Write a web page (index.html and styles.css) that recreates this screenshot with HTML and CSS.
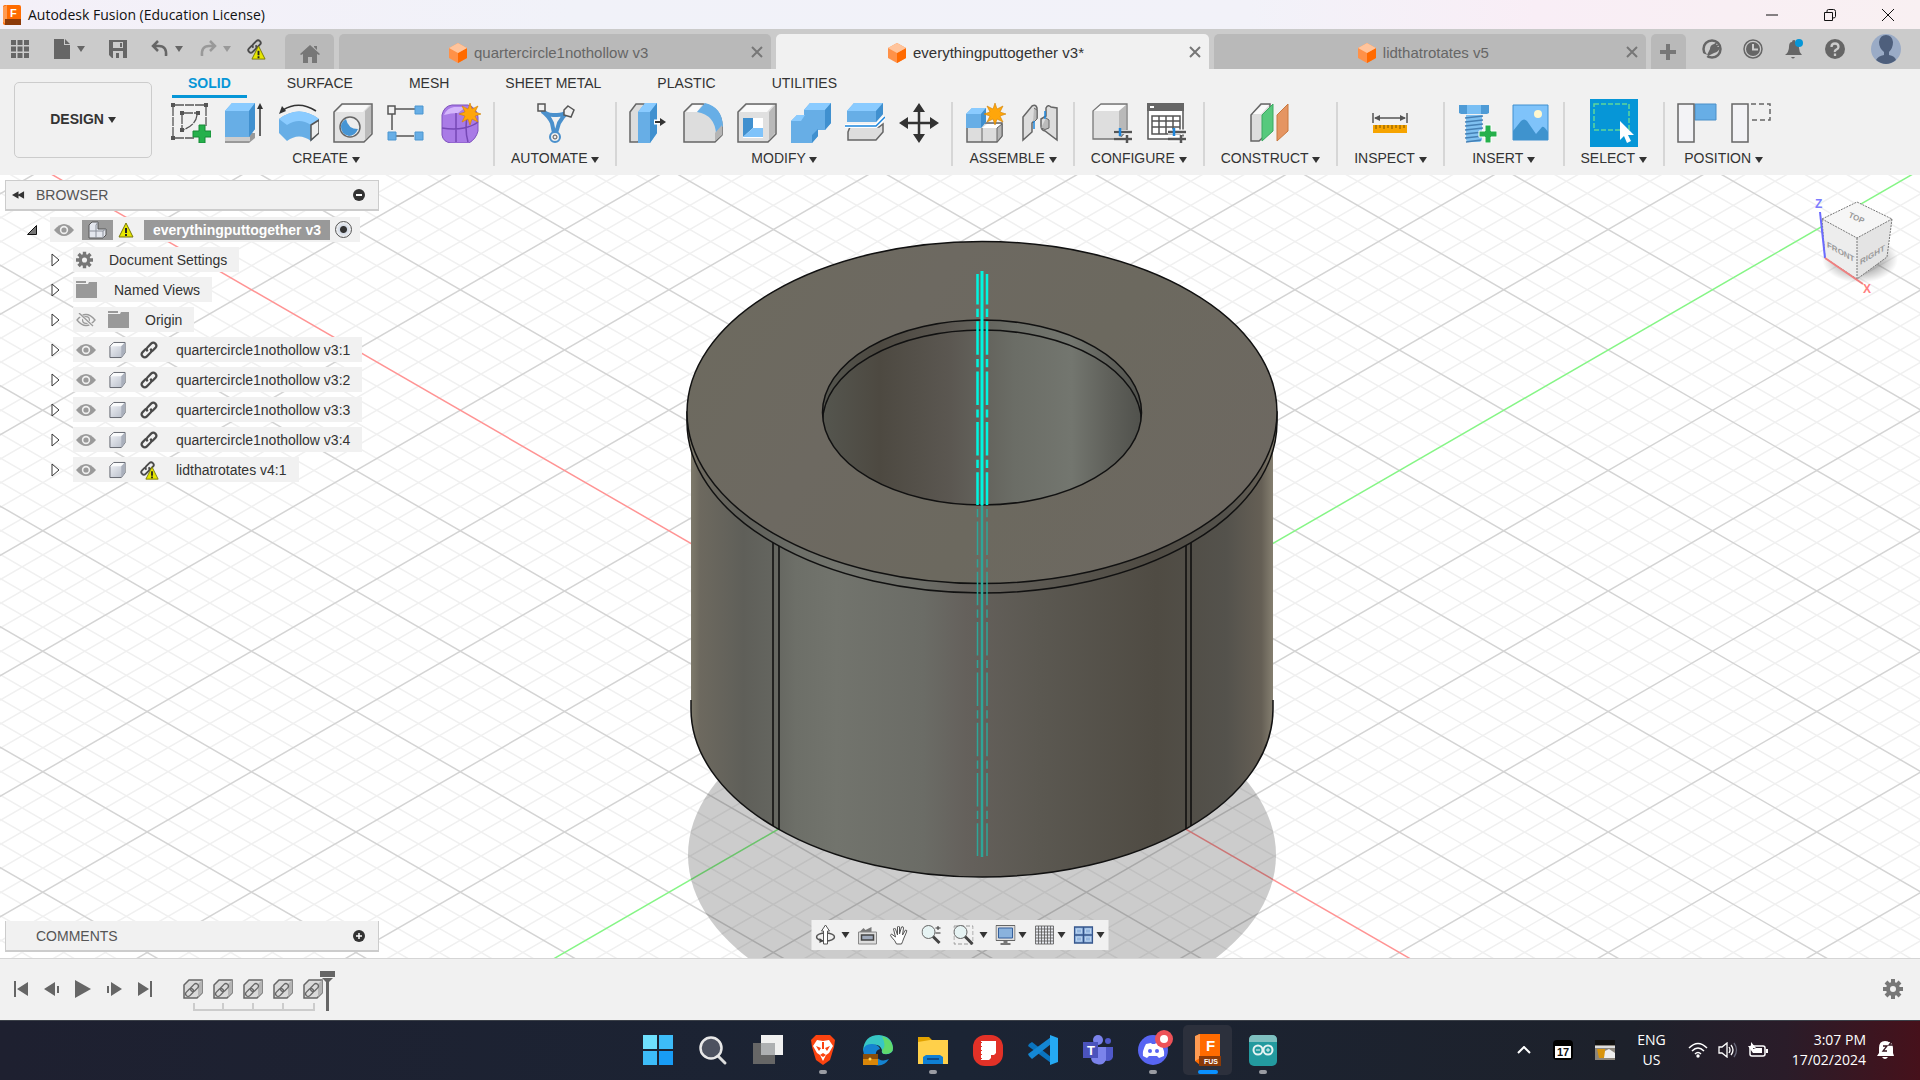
FILE: index.html
```
<!DOCTYPE html>
<html lang="en">
  <head>
    <meta charset="UTF-8" />
    <meta name="viewport" content="width=device-width, initial-scale=1.0" />
    <title>Autodesk Fusion (Education License)</title>
    <link rel="stylesheet" href="styles.css">
  </head>
  <body>
    <!-- Shared icons -->
    <svg class="defs" aria-hidden="true">
      <defs>
        <linearGradient id="steel" x1="0" y1="0" x2="1" y2="1">
          <stop offset="0" stop-color="#f4f6fa" />
          <stop offset="1" stop-color="#b4bac6" />
        </linearGradient>
      </defs>
      <symbol id="doc-cube" viewBox="0 0 20 20">
        <path d="M10 0l9 5v10l-9 5-9-5V5z" fill="#ff9148" />
        <path d="M10 10l9-5v10l-9 5z" fill="#ff6a00" />
        <path d="M10 0l9 5-9 5-9-5z" fill="#ffc49c" />
      </symbol>
      <symbol id="close" viewBox="0 0 12 12">
        <path d="M1 1l10 10M11 1L1 11" fill="none" stroke="#777" stroke-width="2" />
      </symbol>
      <symbol id="warn" viewBox="0 0 16 16">
        <path d="M8 1l7 14H1z" fill="#e6e600" stroke="#77770a" />
        <path d="M8 6v5M8 12v2" stroke="#222" stroke-width="2" />
      </symbol>
      <symbol id="link" viewBox="0 0 20 20">
        <g fill="none" stroke="#4a4a4a" stroke-width="2.2" transform="rotate(-45 10 10)">
          <path d="M9 7H4Q1 7 1 10t3 3h5q2.500 0 3-3" />
          <path d="M11 13h5q3 0 3-3t-3-3h-5q-2.500 0-3 3" />
        </g>
      </symbol>
      <symbol id="eye" viewBox="0 0 20 14">
        <path d="M0 7Q10-5 20 7 10 19 0 7z" fill="#9a9a9a" />
        <circle cx="10" cy="7" r="4.2" fill="#f0f0f0" />
        <circle cx="10" cy="7" r="2.6" fill="#9a9a9a" />
      </symbol>
      <symbol id="eye-off" viewBox="0 0 20 14">
        <path d="M1 7Q10-4 19 7 10 18 1 7z" fill="none" stroke="#999" stroke-width="1.3" />
        <circle cx="10" cy="7" r="3.4" fill="none" stroke="#999" stroke-width="1.3" />
        <path d="M3 1l14 12" stroke="#f0f0f0" stroke-width="3" />
        <path d="M3 0l14 13" stroke="#999" stroke-width="1.3" />
      </symbol>
      <symbol id="folder" viewBox="0 0 21 17">
        <path d="M0 0h10v2H0zM0 3h12l1-2h8v16H0z" fill="#999" />
      </symbol>
      <symbol id="gear" viewBox="0 0 20 20">
        <g stroke="#777" stroke-width="4">
          <path d="M10 0v20M0 10h20M3 3l14 14M17 3L3 17" />
        </g>
        <circle cx="10" cy="10" r="7" fill="#777" />
        <circle cx="10" cy="10" r="3" fill="#f1f1f1" />
      </symbol>
      <symbol id="part" viewBox="0 0 18 18">
        <path d="M1 5l4-4h12v11l-4 5H1z" fill="url(#steel)" stroke="#5c6068" stroke-linejoin="round" />
        <path d="M1.500 5L5 1.500h11L13 5z" fill="#fafbfc" />
        <path d="M13 5v12l4-5V1z" fill="#a9afbb" />
      </symbol>
      <symbol id="feature" viewBox="0 0 20 20">
        <path d="M1 6l5-5h13v13l-5 5H1z" fill="#dadada" stroke="#666" stroke-width="1.5" />
        <path d="M15 5l4-4v13l-4 4z" fill="#b5b5b5" />
        <g fill="none" stroke="#666" stroke-width="1.3" transform="rotate(-45 9 11)">
          <rect x="1" y="8.500" width="9" height="5" rx="2.500" />
          <rect x="8" y="8.500" width="9" height="5" rx="2.500" />
        </g>
      </symbol>
    </svg>

    <header class="titlebar">
      <svg class="app-logo" viewBox="0 0 18 20">
        <rect width="18" height="20" rx="2" fill="#ff6b00" />
        <path d="M0 2l4-2v20l-4-3z" fill="#ff9a50" />
        <path d="M2 14h16v6H2z" fill="#8c3a08" />
        <text x="7" y="12" class="logo-letter">F</text>
      </svg>
      <h1>Autodesk Fusion (Education License)</h1>
      <div class="window-buttons">
        <button aria-label="Minimize"><svg viewBox="0 0 12 12"><path d="M0 6h12" /></svg></button>
        <button aria-label="Restore"><svg viewBox="0 0 12 12"><path d="M.5 3.500h8v8h-8zM3 3V2q0-1.500 1.500-1.500h5Q11.500.5 11.500 2.500v5q0 1.500-2.500 1.500" /></svg></button>
        <button aria-label="Close"><svg viewBox="0 0 12 12"><path d="M0 0l12 12M12 0L0 12" /></svg></button>
      </div>
    </header>

    <!-- Quick access and document tabs -->
    <div class="docbar">
      <div class="quick">
        <button class="q-grid" aria-label="Data panel"><svg viewBox="0 0 18 18"><path d="M0 0h5v5H0zM6.500 0h5v5h-5zM13 0h5v5h-5zM0 6.500h5v5H0zM6.500 6.500h5v5h-5zM13 6.500h5v5h-5zM0 13h5v5H0zM6.500 13h5v5h-5zM13 13h5v5h-5z" fill="#666" /></svg></button>
        <button class="q-file" aria-label="File"><svg viewBox="0 0 18 20"><path d="M1 0h10v6h6v14H1zM12 0l5 5h-5z" fill="#666" /></svg><span class="caret big"></span></button>
        <button class="q-save" aria-label="Save"><svg viewBox="0 0 18 18"><path d="M0 0h18v18H3l-3-3zM4 2v6h10V2zM4 11v7h10v-7z" fill="#666" fill-rule="evenodd" /><path d="M11 3h2v4h-2zM7 13h3v5H7z" fill="#666" /></svg></button>
        <button class="q-undo" aria-label="Undo"><svg viewBox="0 0 18 18"><path d="M7 1L2 6l5 5M2 6h6q8 0 7 10" fill="none" stroke="#666" stroke-width="2.5" /></svg><span class="caret big"></span></button>
        <button class="q-redo" aria-label="Redo"><svg viewBox="0 0 18 18"><path d="M11 1l5 5-5 5M16 6h-6Q2 6 3 16" fill="none" stroke="#999" stroke-width="2.500" /></svg><span class="caret big dim"></span></button>
        <button class="q-link" aria-label="Update references"><svg viewBox="0 0 22 22"><use href="#link" x="1" y="0" width="17" height="17" /><use href="#warn" x="6" y="7" width="15" height="15" /></svg></button>
      </div>
      <nav class="doc-tabs">
        <button class="home" aria-label="Home"><svg viewBox="0 0 20 18"><path d="M10 0l10 9-1 1-2-1v9h-5v-6H8v6H3V9l-2 1-1-1zM14 1h3v4l-3-3z" fill="#777" /></svg></button>
        <div class="doc-tab"><a href="#"><svg viewBox="0 0 20 20"><use href="#doc-cube" /></svg>quartercircle1nothollow v3</a><button aria-label="Close tab"><svg viewBox="0 0 12 12"><use href="#close" /></svg></button></div>
        <div class="doc-tab current"><a href="#"><svg viewBox="0 0 20 20"><use href="#doc-cube" /></svg>everythingputtogether v3*</a><button aria-label="Close tab"><svg viewBox="0 0 12 12"><use href="#close" /></svg></button></div>
        <div class="doc-tab"><a href="#"><svg viewBox="0 0 20 20"><use href="#doc-cube" /></svg>lidthatrotates v5</a><button aria-label="Close tab"><svg viewBox="0 0 12 12"><use href="#close" /></svg></button></div>
        <button class="new-tab" aria-label="New tab"><svg viewBox="0 0 16 16"><path d="M8 0v16M0 8h16" stroke="#777" stroke-width="4" /></svg></button>
      </nav>
      <div class="account">
        <button aria-label="Extensions"><svg viewBox="0 0 20 20"><circle cx="10" cy="10" r="8.500" fill="none" stroke="#666" stroke-width="2.500" /><path d="M4 18l4-8q0-4 4-5l4-3-2 4 4-1-3 3 3 0q-1 5-6 6z" fill="#666" /><path d="M0 14l6 2-3 4z" fill="#cbcbcb" /></svg></button>
        <button aria-label="Job status"><svg viewBox="0 0 20 20"><circle cx="10" cy="10" r="9" fill="none" stroke="#666" stroke-width="1.500" /><circle cx="10" cy="10" r="7" fill="#666" /><path d="M10 5v5.500h5" fill="none" stroke="#ccc" stroke-width="2" /></svg></button>
        <button aria-label="Notifications"><svg viewBox="0 0 20 20"><path d="M1 16q4-3 4-8 0-5 3-5 0-2 2-2t1 2q4 1 4 6 0 4 3 7zM7 18h4q-2 3-4 0z" fill="#666" /><circle cx="15" cy="4" r="4" fill="#0696d7" /></svg></button>
        <button aria-label="Help"><svg viewBox="0 0 20 20"><circle cx="10" cy="10" r="10" fill="#666" /><path d="M6.500 8q0-3.500 3.500-3.500T13.500 8q0 1.500-2 2.500T10 13M10 14.500v2.500" fill="none" stroke="#ccc" stroke-width="2.300" /></svg></button>
        <button class="avatar" aria-label="Profile"><svg viewBox="0 0 30 30"><circle cx="15" cy="15" r="15" fill="#9aabc6" /><path d="M5 26q2-4 8-5v-3Q8 14 8 8q1-7 7-7t7 7q0 6-4 10v3q6 1 7 5-10 8-20 0z" fill="#4e5f7c" /></svg></button>
      </div>
    </div>

    <!-- Ribbon -->
    <section class="ribbon">
      <button class="workspace">DESIGN <span class="caret"></span></button>
      <div class="ribbon-main">
        <nav class="ribbon-tabs">
          <a href="#" class="active">SOLID</a>
          <a href="#">SURFACE</a>
          <a href="#">MESH</a>
          <a href="#">SHEET METAL</a>
          <a href="#">PLASTIC</a>
          <a href="#">UTILITIES</a>
        </nav>
        <div class="groups">
          <div class="group">
            <div class="tools">
              <button aria-label="Create sketch"><svg viewBox="0 0 40 40"><path d="M4 2h31M2 4v31M35 4v20M4 35h19M11 12v14M13 10h13M26 12q-1 10-14 15" fill="none" stroke="#555" stroke-width="1.300" stroke-dasharray="9 1" /><path d="M0 0h4v4H0zM33 0h4v4h-4zM0 33h4v4H0zM9 8h4v4H9zM25 8h4v4h-4zM9 25h4v4H9z" fill="#555" /><path d="M28 22h6v6h6v6h-6v6h-6v-6h-6v-6h6z" fill="#25b04b" stroke="#178a36" /></svg></button>
              <button aria-label="Extrude"><svg viewBox="0 0 40 40"><path d="M0 35l6-5h24v5l-6 5H0z" fill="#999" /><path d="M0 34h25v4H0z" fill="#ccc" /><path d="M0 8l7-8h23v26l-6 8H0z" fill="#67aee6" /><path d="M0 8l7-8h23l-6 8z" fill="#8acbff" /><path d="M24 8l6-8v26l-6 8z" fill="#4090cf" /><path d="M35 33V4" stroke="#333" stroke-width="1.500" /><path d="M35 0l3 6h-6z" fill="#333" /></svg></button>
              <button aria-label="Revolve"><svg viewBox="0 0 40 40"><path d="M0 16q20-15 40 0v14l-8 8q-12-9-24 0L0 30z" fill="#67aee6" /><path d="M0 16q20-15 40 0l-8 6q-12-8-24 0z" fill="#8acbff" /><path d="M32 22l8-5v13l-8 7z" fill="#eee" stroke="#555" stroke-width="1.500" /><path d="M37 8Q20-3 4 7" fill="none" stroke="#333" stroke-width="1.500" /><path d="M0 11l3-8 4 5z" fill="#333" /></svg></button>
              <button aria-label="Hole"><svg viewBox="0 0 40 40"><path d="M1 9l8-8h30v30l-8 8H1z" fill="#e2e2e2" stroke="#666" stroke-width="1.500" /><path d="M32 8l6-6v28l-6 7z" fill="#bbb" /><path d="M3 9l7-7h26l-6 7z" fill="#f8f8f8" /><circle cx="17" cy="24" r="10" fill="#eee" stroke="#666" stroke-width="1.500" /><path d="M13 16q2 10 12 10-3 7-9 7-8-2-8-9 0-5 5-8z" fill="#4695d4" /></svg></button>
              <button aria-label="Pattern"><svg viewBox="0 0 40 40"><path d="M8 6h20M5 10v17M9 33h18" stroke="#555" stroke-width="1.500" /><path d="M1 3h7v8H1z" fill="#f1f1f1" stroke="#555" stroke-width="1.500" /><path d="M28 3h8v8h-8zM1 29h8v8H1zM28 29h8v8h-8z" fill="#67aee6" stroke="#4d96d0" /></svg></button>
              <button aria-label="Create form"><svg viewBox="0 0 40 40"><path d="M1 12q2-9 10-10h16q9 3 10 12v14q-2 8-9 12H10q-8-1-9-8z" fill="#a97be6" stroke="#7e52bd" /><path d="M3 12q3-7 10-8h12l-8 6q-7 0-14 2z" fill="#d4b6fb" /><path d="M1 25q12 2 22 0 9-2 14-6M15 10v29M27 10q-4 14 0 29" fill="none" stroke="#7548b5" stroke-width="1.500" /><path d="M29 0l2 6 6-3-3 6 6 2-6 2 3 6-6-3-2 6-2-6-6 3 3-6-6-2 6-2-3-6 6 3z" fill="#ffa60a" stroke="#d18200" stroke-width=".6" /></svg></button>
            </div>
            <button class="group-label">CREATE <span class="caret"></span></button>
          </div>
          <div class="group">
            <div class="tools">
              <button aria-label="Automated modeling"><svg viewBox="0 0 40 40"><path d="M6 6q5 6 12 6h4q6 0 11-4M7 8q7 5 10 12l2 10M33 9q-6 5-9 11l-3 10" fill="none" stroke="#4a90cc" stroke-width="4" /><circle cx="20" cy="34" r="5" fill="#eee" stroke="#4a90cc" stroke-width="2" /><circle cx="20" cy="34" r="2" fill="none" stroke="#555" /><path d="M3 1h7v7H3z" fill="#f1f1f1" stroke="#555" stroke-width="1.500" /><path d="M33 3l6 4-3 7-7-2v-5z" fill="#f1f1f1" stroke="#555" stroke-width="1.500" /></svg></button>
            </div>
            <button class="group-label">AUTOMATE <span class="caret"></span></button>
          </div>
          <div class="group">
            <div class="tools">
              <button aria-label="Press pull"><svg viewBox="0 0 40 40"><path d="M1 9l6-8h8v30l-6 8H1z" fill="#ddd" stroke="#666" stroke-width="1.500" /><path d="M9 9l7-9h12v30l-7 10H9z" fill="#67aee6" /><path d="M9 9l7-9h12l-7 9z" fill="#8acbff" /><path d="M21 9l7-9v30l-7 10z" fill="#4090cf" /><path d="M25 19h8" stroke="#fff" stroke-width="5" /><path d="M26 19h7" stroke="#333" stroke-width="2" /><path d="M31 15l6 4-6 4z" fill="#333" /></svg></button>
              <button aria-label="Fillet"><svg viewBox="0 0 40 40"><path d="M1 9l8-8h11q19 4 19 23v8l-7 7H1z" fill="#ddd" stroke="#666" stroke-width="1.500" /><path d="M3 9l7-7h9l-5 7z" fill="#fafafa" /><path d="M14 9l8-9q17 4 18 23l-7 8Q32 12 14 9z" fill="#67aee6" /><path d="M32 30l7-8v10l-7 6z" fill="#b5b5b5" /></svg></button>
              <button aria-label="Shell"><svg viewBox="0 0 40 40"><path d="M1 9l8-8h30v30l-8 8H1z" fill="#e0e0e0" stroke="#666" stroke-width="1.500" /><path d="M32 9l6-7v28l-6 7z" fill="#b9b9b9" /><path d="M3 9l7-7h26l-6 7z" fill="#fafafa" /><path d="M6 15h20v20H6z" fill="#fff" /><path d="M6 15h10v10L6 34z" fill="#4090cf" /><path d="M16 25h10v9H6z" fill="#7fc3fa" /></svg></button>
              <button aria-label="Combine"><svg viewBox="0 0 40 40"><path d="M0 18l6-6h7V7l6-7h21v20l-6 7h-7v6l-6 7H0z" fill="#67aee6" /><path d="M0 18l6-6h8l-4 6zM13 7l6-7h21l-6 7z" fill="#8acbff" /><path d="M34 7l6-7v20l-6 7zM21 32l6-6v7l-6 7z" fill="#4090cf" /></svg></button>
              <button aria-label="Split body"><svg viewBox="0 0 40 40"><path d="M3 29l2-5h29l4-3v8l-7 8H3z" fill="#ddd" stroke="#666" stroke-width="1.500" /><path d="M2 8l7-8h29v11l-7 8H2z" fill="#67aee6" /><path d="M2 8l7-8h29l-7 8z" fill="#8acbff" /><path d="M31 8l7-8v11l-7 8z" fill="#4090cf" /><path d="M0 23h31l9-9" fill="none" stroke="#fff" stroke-width="4" /><path d="M0 23h31l9-9" fill="none" stroke="#1d86dd" stroke-width="1.500" /></svg></button>
              <button aria-label="Move"><svg viewBox="0 0 40 40"><path d="M20 8v24M8 20h24" stroke="#333" stroke-width="2.500" /><path d="M20 0l6 9H14zM20 40l6-9H14zM0 20l9-6v12zM40 20l-9-6v12z" fill="#333" /></svg></button>
            </div>
            <button class="group-label">MODIFY <span class="caret"></span></button>
          </div>
          <div class="group">
            <div class="tools">
              <button aria-label="New component"><svg viewBox="0 0 40 40"><path d="M1 24l4-4h31v13l-5 6H1z" fill="#ddd" stroke="#666" stroke-width="1.500" /><path d="M16 25l5-4h14l-4 4z" fill="#fff" /><path d="M31 25l5-4v12l-5 6zM16 25v14" fill="#b7b7b7" stroke="#666" /><path d="M0 11l6-6h14v14l-5 6H0z" fill="#67aee6" /><path d="M0 11l6-6h14l-5 6z" fill="#8acbff" /><path d="M15 11l5-6v14l-5 6z" fill="#4090cf" /><path d="M29 0l2 6 6-3-3 6 6 2-6 2 3 6-6-3-2 6-2-6-6 3 3-6-6-2 6-2-3-6 6 3z" fill="#ffa60a" stroke="#d18200" stroke-width=".6" /></svg></button>
              <button aria-label="Joint"><svg viewBox="0 0 40 40"><path d="M3 14L12 3q4-2 5 2v10l-5 5v9l-9 8zM37 5v32l-12-9q-4-1-4-5v-7l5-3V5q2-4 5-1z" fill="#ddd" stroke="#666" stroke-width="1.500" /><path d="M14 5l3 2v9l-4 4M26 15l3 2v8q-4 3-8 0" fill="#bbb" stroke="#666" /><path d="M14 18v8M25 8v8" stroke="#1d86dd" stroke-width="1.500" /></svg></button>
            </div>
            <button class="group-label">ASSEMBLE <span class="caret"></span></button>
          </div>
          <div class="group">
            <div class="tools">
              <button aria-label="Configure design"><svg viewBox="0 0 40 40"><path d="M1 8l8-7h26v26l-8 9H1z" fill="#dedede" stroke="#777" stroke-width="1.300" /><path d="M2 8l7-6h25l-7 6z" fill="#fafafa" /><path d="M27 8l7-6v25l-7 8z" fill="#b9b9b9" /><path d="M22 29h18M22 36h18" stroke="#fff" stroke-width="4" /><path d="M22 29h18M22 36h18" stroke="#555" stroke-width="2.500" /><path d="M35 32v8" stroke="#555" stroke-width="2.500" /><path d="M28 25v8" stroke="#1d86dd" stroke-width="2.500" /></svg></button>
              <button aria-label="Configuration table"><svg viewBox="0 0 40 40"><path d="M2 3h35v33H2z" fill="#fff" stroke="#555" stroke-width="1.500" /><path d="M1 0h37v8H1z" fill="#666" /><path d="M4 3h4v2H4z" fill="#fff" /><path d="M6 13h28v18H6zM6 18h28M6 24h28M13 13v18M20 13v18M27 13v18" fill="none" stroke="#555" stroke-width="1.500" /><path d="M22 29h18M22 36h18" stroke="#fff" stroke-width="5" /><path d="M22 29h18M22 36h18M35 32v8" stroke="#555" stroke-width="2.500" /><path d="M28 25v8" stroke="#1d86dd" stroke-width="2.500" /></svg></button>
            </div>
            <button class="group-label">CONFIGURE <span class="caret"></span></button>
          </div>
          <div class="group">
            <div class="tools">
              <button aria-label="Offset plane"><svg viewBox="0 0 40 40"><path d="M1 12L11 1h9v27L9 38H1z" fill="#ddd" stroke="#666" stroke-width="1.500" /><path d="M3 11l9-9h7l-8 9z" fill="#fafafa" /><path d="M12 12L23 1v27L12 38z" fill="#57c97d" stroke="#3aa961" /><path d="M27 12L38 1v27L27 38z" fill="#e59562" stroke="#c9783f" /></svg></button>
            </div>
            <button class="group-label">CONSTRUCT <span class="caret"></span></button>
          </div>
          <div class="group">
            <div class="tools">
              <button aria-label="Measure"><svg viewBox="0 0 40 40"><path d="M3 10v10M37 10v10M5 15h30" stroke="#555" stroke-width="1.500" /><path d="M4 15l6-3v6zM36 15l-6-3v6z" fill="#555" /><path d="M3 22h34v8H3z" fill="#f6a400" /><path d="M6 22v4M10 22v3M14 22v4M18 22v3M22 22v4M26 22v3M30 22v4M34 22v3" stroke="#7a5200" /></svg></button>
            </div>
            <button class="group-label">INSPECT <span class="caret"></span></button>
          </div>
          <div class="group">
            <div class="tools">
              <button aria-label="Insert fastener"><svg viewBox="0 0 40 40"><path d="M2 2h30v8l-2 1H4l-2-1z" fill="#4e9bd6" /><path d="M10 2h14v9H10z" fill="#79bff4" /><path d="M9 12h16v25l-2 2H11l-2-2z" fill="#7fc0f0" /><path d="M8 15l18-2M8 19l18-2M8 23l18-2M8 27l18-2M8 31l18-2M8 35l18-2M9 39l15-2" stroke="#4580b5" stroke-width="1.300" /><path d="M28 22h6v6h6v6h-6v6h-6v-6h-6v-6h6z" fill="#25b04b" stroke="#fff" /></svg></button>
              <button aria-label="Insert image"><svg viewBox="0 0 40 40"><path d="M2 2h35v35H2z" fill="#7fc3fa" stroke="#4090cf" /><path d="M2 28l8-10q3-3 6 0l9 13 6-7q2-1 6 5v8H2z" fill="#3f93ce" /><circle cx="27" cy="11" r="4" fill="#fff8cf" /></svg></button>
            </div>
            <button class="group-label">INSERT <span class="caret"></span></button>
          </div>
          <div class="group">
            <div class="tools">
              <button class="selected" aria-label="Select"><svg viewBox="0 0 48 48"><path d="M4 5h35v26H4z" fill="none" stroke="#5fd69a" stroke-width="1.500" stroke-dasharray="5 2" /><path d="M30 22v19l4-4 3 7 4-2-3-6h6z" fill="#fff" /></svg></button>
            </div>
            <button class="group-label">SELECT <span class="caret"></span></button>
          </div>
          <div class="group">
            <div class="tools">
              <button aria-label="Capture position"><svg viewBox="0 0 40 40"><path d="M18 1h21v16H18z" fill="#67aee6" stroke="#4a8fc8" /><path d="M1 1h16v38H1z" fill="#f3f3f6" stroke="#666" stroke-width="1.500" /></svg></button>
              <button aria-label="Revert position"><svg viewBox="0 0 40 40"><path d="M20 1h19v16H18" fill="none" stroke="#666" stroke-width="1.500" stroke-dasharray="5 3" /><path d="M1 1h16v38H1z" fill="#f3f3f6" stroke="#666" stroke-width="1.500" /></svg></button>
            </div>
            <button class="group-label">POSITION <span class="caret"></span></button>
          </div>
        </div>
      </div>
    </section>

    <!-- Canvas -->
    <main class="canvas">
      <svg class="scene" viewBox="0 175 1920 783" preserveAspectRatio="xMidYMid slice">
        <defs>
          <linearGradient id="wall" gradientUnits="userSpaceOnUse" x1="691" y1="0" x2="1273" y2="0">
            <stop offset="0" stop-color="#7e7a6b" />
            <stop offset=".015" stop-color="#6d695f" />
            <stop offset=".09" stop-color="#5f5f59" />
            <stop offset=".14" stop-color="#64655f" />
            <stop offset=".18" stop-color="#6d6f68" />
            <stop offset=".25" stop-color="#72746d" />
            <stop offset=".4" stop-color="#6b6c66" />
            <stop offset=".47" stop-color="#65615c" />
            <stop offset=".6" stop-color="#5b5851" />
            <stop offset=".8" stop-color="#4f4b43" />
            <stop offset=".92" stop-color="#54524c" />
            <stop offset=".98" stop-color="#655f55" />
            <stop offset="1" stop-color="#857f70" />
          </linearGradient>
          <linearGradient id="bore" gradientUnits="userSpaceOnUse" x1="822" y1="0" x2="1142" y2="0">
            <stop offset="0" stop-color="#55564f" />
            <stop offset=".18" stop-color="#4d4941" />
            <stop offset=".4" stop-color="#5b5751" />
            <stop offset=".6" stop-color="#6b6d66" />
            <stop offset=".78" stop-color="#73766f" />
            <stop offset=".9" stop-color="#5f605a" />
            <stop offset="1" stop-color="#50514c" />
          </linearGradient>
          <linearGradient id="lid" x1="0" y1=".3" x2="1" y2=".7">
            <stop offset="0" stop-color="#6d6a5f" />
            <stop offset=".3" stop-color="#6d6961" />
            <stop offset=".6" stop-color="#6c695f" />
            <stop offset="1" stop-color="#6d6861" />
          </linearGradient>
          <clipPath id="bore-clip"><ellipse cx="982" cy="412.500" rx="159.500" ry="92.500" /></clipPath>
        </defs>
        <g id="grid"></g>
        <ellipse cx="982" cy="855" rx="294" ry="170" fill="#000" fill-opacity=".2" />
        <path d="M691 425V709A291 168 0 0 0 1273 709V425z" fill="url(#wall)" />
        <path d="M691 700V709A291 168 0 0 0 1273 709V700" fill="none" stroke="#111" stroke-width="1.500" />
        <path d="M773 530V826M779 530V829M1186 530V829M1191 530V826" stroke="#0c0c0c" stroke-width="1.500" />
        <path d="M687 412V422A295 171 0 0 0 1277 422V412z" fill="url(#wall)" stroke="#111" stroke-width="1.500" />
        <ellipse cx="982" cy="412.500" rx="295" ry="171" fill="url(#lid)" stroke="#111" stroke-width="1.500" />
        <ellipse cx="982" cy="412.500" rx="159.500" ry="92.500" fill="url(#bore)" />
        <g clip-path="url(#bore-clip)">
          <ellipse cx="982" cy="422.500" rx="159.500" ry="92.500" fill="none" stroke="#111" stroke-width="1.500" />
        </g>
        <ellipse cx="982" cy="412.500" rx="159.500" ry="92.500" fill="none" stroke="#111" stroke-width="1.500" />
        <g stroke="#00f5e0" stroke-width="2.500">
          <path d="M982 271V505" stroke-width="3" />
          <path d="M977.500 274V505M987 274V505" stroke-dasharray="33.500 4.300 8.200 4.300" stroke-dashoffset="3" />
        </g>
        <g stroke="#2fa598" stroke-width="2.500">
          <path d="M982 505V857" />
          <path d="M977.500 509V856M987 509V856" stroke-width="1.500" stroke-dasharray="8.200 4.300 33.500 4.300" />
        </g>
      </svg>

      <aside class="browser">
        <div class="panel-head">
          <button aria-label="Collapse panel"><svg viewBox="0 0 14 8"><path d="M7 0v8L0 4zM13 0v8L6 4z" fill="#333" /></svg></button>
          <h2>BROWSER</h2>
          <button aria-label="Hide browser"><svg class="round" viewBox="0 0 12 12"><circle cx="6" cy="6" r="6" fill="#333" /><path d="M3 6h6" stroke="#fff" stroke-width="2" /></svg></button>
        </div>
        <ul class="tree">
          <li class="root">
            <svg class="open" viewBox="0 0 10 10"><path d="M9.500.5v9h-9z" fill="#777" stroke="#111" /></svg>
            <div class="node">
              <svg class="i-eye" viewBox="0 0 20 14"><use href="#eye" /></svg>
              <span class="assembly"><svg viewBox="0 0 20 18"><path d="M1 4l3-3h6v7h8v6l-3 3H1z" fill="#e4e7ee" stroke="#555" stroke-linejoin="round" /><path d="M1 10h7v7M8 4v6h7v7M8 4l2-3M15 10l3-2" fill="none" stroke="#8b909a" /></svg></span>
              <svg class="i-warn" viewBox="0 0 16 16"><use href="#warn" /></svg>
              <span class="label">everythingputtogether v3</span>
              <input type="radio" aria-label="Activate everythingputtogether v3" checked />
            </div>
          </li>
          <li><svg class="shut" viewBox="0 0 9 14"><path d="M1 1v12l7-6z" /></svg><div class="node settings"><svg class="i-gear" viewBox="0 0 20 20"><use href="#gear" /></svg><span>Document Settings</span></div></li>
          <li><svg class="shut" viewBox="0 0 9 14"><path d="M1 1v12l7-6z" /></svg><div class="node"><svg class="i-folder" viewBox="0 0 21 17"><use href="#folder" /></svg><span>Named Views</span></div></li>
          <li><svg class="shut" viewBox="0 0 9 14"><path d="M1 1v12l7-6z" /></svg><div class="node origin"><svg class="i-eye" viewBox="0 0 20 14"><use href="#eye-off" /></svg><svg class="i-folder" viewBox="0 0 21 17"><use href="#folder" /></svg><span>Origin</span></div></li>
          <li><svg class="shut" viewBox="0 0 9 14"><path d="M1 1v12l7-6z" /></svg><div class="node"><svg class="i-eye" viewBox="0 0 20 14"><use href="#eye" /></svg><svg class="i-part" viewBox="0 0 18 18"><use href="#part" /></svg><svg class="i-link" viewBox="0 0 20 20"><use href="#link" /></svg><span>quartercircle1nothollow v3:1</span></div></li>
          <li><svg class="shut" viewBox="0 0 9 14"><path d="M1 1v12l7-6z" /></svg><div class="node"><svg class="i-eye" viewBox="0 0 20 14"><use href="#eye" /></svg><svg class="i-part" viewBox="0 0 18 18"><use href="#part" /></svg><svg class="i-link" viewBox="0 0 20 20"><use href="#link" /></svg><span>quartercircle1nothollow v3:2</span></div></li>
          <li><svg class="shut" viewBox="0 0 9 14"><path d="M1 1v12l7-6z" /></svg><div class="node"><svg class="i-eye" viewBox="0 0 20 14"><use href="#eye" /></svg><svg class="i-part" viewBox="0 0 18 18"><use href="#part" /></svg><svg class="i-link" viewBox="0 0 20 20"><use href="#link" /></svg><span>quartercircle1nothollow v3:3</span></div></li>
          <li><svg class="shut" viewBox="0 0 9 14"><path d="M1 1v12l7-6z" /></svg><div class="node"><svg class="i-eye" viewBox="0 0 20 14"><use href="#eye" /></svg><svg class="i-part" viewBox="0 0 18 18"><use href="#part" /></svg><svg class="i-link" viewBox="0 0 20 20"><use href="#link" /></svg><span>quartercircle1nothollow v3:4</span></div></li>
          <li><svg class="shut" viewBox="0 0 9 14"><path d="M1 1v12l7-6z" /></svg><div class="node"><svg class="i-eye" viewBox="0 0 20 14"><use href="#eye" /></svg><svg class="i-part" viewBox="0 0 18 18"><use href="#part" /></svg><svg class="i-link" viewBox="0 0 20 20"><use href="#link" width="17" height="17" /><use href="#warn" x="6" y="6" width="14" height="14" /></svg><span>lidthatrotates v4:1</span></div></li>
        </ul>
      </aside>

      <svg class="viewcube" viewBox="0 0 90 110">
        <defs>
          <radialGradient id="cube-shadow"><stop offset=".5" stop-opacity=".3" /><stop offset="1" stop-opacity="0" /></radialGradient>
        </defs>
        <ellipse cx="50" cy="74" rx="38" ry="24" fill="url(#cube-shadow)" />
        <path d="M47 17l35 17-35 19-35-19z" fill="#f6f6f6" />
        <path d="M12 34l35 19v41L15 73z" fill="#ededed" />
        <path d="M82 34L47 53v41l30-22z" fill="#e4e4e4" />
        <path d="M12 34l35-17 35 17-5 38-30 22-32-21zM12 34l35 19 35-19M47 53v41" fill="none" stroke="#777" stroke-dasharray="2 1" />
        <path d="M10 27l5 46" stroke="#6a6aff" stroke-width="2" />
        <path d="M15 73l38 26" stroke="#f08080" stroke-width="2" />
        <text x="5" y="23" class="axis z">Z</text>
        <text x="53" y="108" class="axis x">X</text>
        <text x="17" y="62" class="face" transform="skewY(29)" transform-origin="17 62">FRONT</text>
        <text x="50" y="80" class="face" transform="skewY(-31)" transform-origin="50 80">RIGHT</text>
        <text x="38" y="32" class="face" transform="rotate(24 38 32)">TOP</text>
      </svg>

      <div class="comments panel-head">
        <h2>COMMENTS</h2>
        <button aria-label="Show comments"><svg class="round" viewBox="0 0 12 12"><circle cx="6" cy="6" r="6" fill="#333" /><path d="M3 6h6M6 3v6" stroke="#fff" stroke-width="1.500" /></svg></button>
      </div>

      <div class="navbar">
        <button class="menu" aria-label="Orbit"><svg viewBox="0 0 20 20"><ellipse cx="10" cy="12" rx="9" ry="4" fill="none" stroke="#555" stroke-width="1.500" /><path d="M8 19V6H6l4-6 4 6h-2v13z" fill="#fff" stroke="#555" /><path d="M4 13l4 3-4 2z" fill="#444" /></svg><span class="caret"></span></button>
        <button aria-label="Look at"><svg viewBox="0 0 20 20"><path d="M2 7l4-4 2 2 6-3v5z" fill="#777" /><path d="M1 7h18v12H1z" fill="#ddd" stroke="#888" /><path d="M4 10h12v5H4z" fill="#9fa9bb" stroke="#444" stroke-width="1.500" /></svg></button>
        <button aria-label="Pan"><svg viewBox="0 0 20 20"><path d="M7 19q-1-3-5-7-2-2 0-3l4 3-2-8q1-2 2 0l2 6V2q1-2 2 0v7l2-7q2-1 2 1l-1 7 3-5q2 0 1 2l-3 7q-1 3-2 5z" fill="#fff" stroke="#555" /></svg></button>
        <button aria-label="Zoom"><svg viewBox="0 0 20 20"><path d="M11 11l7 7" stroke="#444" stroke-width="3" /><circle cx="7" cy="7" r="6.500" fill="#e6f3f3" stroke="#666" /><path d="M14 3h5M16.500 1v4M14 8h5" stroke="#333" /></svg></button>
        <button class="menu" aria-label="Fit"><svg viewBox="0 0 20 20"><path d="M.5 1h19v18H.5z" fill="none" stroke="#999" stroke-dasharray="4 2" /><path d="M11 11l8 8" stroke="#444" stroke-width="3" /><circle cx="7" cy="7" r="6.500" fill="#e6f3f3" stroke="#666" /></svg><span class="caret"></span></button>
        <button class="menu tight" aria-label="Display settings"><svg viewBox="0 0 20 20"><path d="M.5.500h19v15H.5z" fill="#ddd" stroke="#666" /><path d="M3 3h14v10H3z" fill="#8ab2dd" stroke="#345f9c" /><path d="M8 16h4v2h3v2H5v-2h3z" fill="#777" /></svg><span class="caret"></span></button>
        <button class="menu tight" aria-label="Grid and snaps"><svg viewBox="0 0 20 20"><path d="M1 1h18v18H1z" fill="#e4e6ec" /><path d="M1 1h18v18H1zM4 1v18M7 1v18M10 1v18M13 1v18M16 1v18M1 4h18M1 7h18M1 10h18M1 13h18M1 16h18" fill="none" stroke="#555" stroke-width=".8" /></svg><span class="caret"></span></button>
        <button class="tight" aria-label="Viewports"><svg viewBox="0 0 20 20"><path d="M1 2h18v16H1z" fill="#94b6df" stroke="#35558c" stroke-width="1.300" /><path d="M10 2v16M1 10h18" stroke="#35558c" stroke-width="1.500" /><path d="M3 4h5v4H3zM12 4h5v4h-5zM3 12h5v4H3zM12 12h5v4h-5z" fill="none" stroke="#b9d2ef" /></svg><span class="caret"></span></button>
      </div>
    </main>

    <!-- Timeline -->
    <section class="timeline">
      <div class="playback">
        <button aria-label="Go to start"><svg viewBox="0 0 16 18"><path d="M1 1h2v16H1zM15 2v14L4 9z" fill="#666" /></svg></button>
        <button aria-label="Step back"><svg viewBox="0 0 16 18"><path d="M11 2v14L0 9zM13 6h2v7h-2z" fill="#666" /></svg></button>
        <button aria-label="Play"><svg viewBox="0 0 16 18"><path d="M0 0v18l16-9z" fill="#666" /></svg></button>
        <button aria-label="Step forward"><svg viewBox="0 0 16 18"><path d="M5 2v14l11-7zM1 6h2v7H1z" fill="#666" /></svg></button>
        <button aria-label="Go to end"><svg viewBox="0 0 16 18"><path d="M1 2v14l11-7zM13 1h2v16h-2z" fill="#666" /></svg></button>
      </div>
      <div class="features">
        <div class="feature-row">
          <button aria-label="Component 1"><svg viewBox="0 0 20 20"><use href="#feature" /></svg></button>
          <button aria-label="Component 2"><svg viewBox="0 0 20 20"><use href="#feature" /></svg></button>
          <button aria-label="Component 3"><svg viewBox="0 0 20 20"><use href="#feature" /></svg></button>
          <button aria-label="Component 4"><svg viewBox="0 0 20 20"><use href="#feature" /></svg></button>
          <button aria-label="Component 5"><svg viewBox="0 0 20 20"><use href="#feature" /></svg></button>
        </div>
        <svg class="bracket" viewBox="0 0 122 8"><path d="M1 0v7h120V0M30 0v7M60 0v7M90 0v7" fill="none" stroke="#ccc" stroke-width="2" /></svg>
        <svg class="marker" viewBox="0 0 15 40"><path d="M0 0h15v6H0zM2 7h11l-4 4v29H6V11z" fill="#666" /></svg>
      </div>
      <button class="timeline-gear" aria-label="Timeline settings"><svg viewBox="0 0 20 20"><use href="#gear" /></svg></button>
    </section>

    <!-- Taskbar -->
    <footer class="taskbar">
      <div class="apps">
        <button aria-label="Start"><svg viewBox="0 0 32 32"><path d="M1 1h14v14H1zM17 1h14v14H17zM1 17h14v14H1zM17 17h14v14H17z" fill="#3dbcf8" /><path d="M1 1h14v14H1z" fill="#6fe0fd" /><path d="M17 17h14v14H17z" fill="#189cf5" /></svg></button>
        <button aria-label="Search"><svg viewBox="0 0 32 32"><path d="M20 21l8 8" stroke="#ddd" stroke-width="3" stroke-linecap="round" /><circle cx="14" cy="14" r="10.500" fill="#4d5260" stroke="#e8e8e8" stroke-width="2.500" /></svg></button>
        <button aria-label="Task view"><svg viewBox="0 0 32 32"><path d="M9 1h22v20H9z" fill="#f0f0f0" /><path d="M1 9h22v21H1z" fill="#666" /><path d="M9 9h14v12H9z" fill="#aeb0b2" /></svg></button>
        <button class="running" aria-label="Brave"><svg viewBox="0 0 32 32"><path d="M9 1h14l5 5-1 7-4 13-7 5-7-5L5 13 4 6z" fill="#fb4310" /><path d="M10 6l6 1 6-1 4 6-4 7-3 2-3 6-3-6-3-2-4-7z" fill="#fff" /><path d="M9 12l5 2-2 3zM23 12l-5 2 2 3zM13 21l3-2 3 2-3 2zM15 8h2v7h-2z" fill="#fb4310" /></svg></button>
        <button aria-label="Edge"><svg viewBox="0 0 32 32"><path d="M1 17Q2 1 17 1q13 1 14 13 0 7-9 6-3-1-2-4Q18 10 11 11 4 12 1 17z" fill="#37c6c5" /><path d="M20 2q10 3 11 12 0 6-9 6-2-1-2-4 5-3 0-14z" fill="#61da6c" /><path d="M1 16q2-7 10-6 6 1 7 5-5 1-4 7 4 7 13 3-5 8-14 6Q2 28 1 16z" fill="#1583d1" /><path d="M1 20h15v11H1z" fill="#d98609" /><path d="M1 20h15v5H1z" fill="#8a4d08" /><circle cx="8" cy="25" r="1.500" fill="#ffd75a" /></svg></button>
        <button class="running" aria-label="File Explorer"><svg viewBox="0 0 32 32"><path d="M1 3h11l3 3h12v8H1z" fill="#e2a200" /><path d="M1 8l12-2h18v24H1z" fill="#ffd04a" /><path d="M6 30v-7l3-2h14l3 2v7z" fill="#0f80d5" /><path d="M10 25h12" stroke="#0a4d8e" stroke-width="2" /></svg></button>
        <button aria-label="Reader"><svg viewBox="0 0 32 32"><rect x="1" y="1" width="30" height="31" rx="12" fill="#e23127" /><path d="M9 7h15v12l-2 2h-3v3l-2 2H9z" fill="#fff" /><path d="M9 8v18" stroke="#e23127" stroke-width="2" stroke-dasharray="1 3" /></svg></button>
        <button aria-label="Visual Studio Code"><svg viewBox="0 0 32 32"><path d="M2 10l3-2 19 15v6L1 12z" fill="#0a74bf" /><path d="M2 22l3 3L24 10V3L1 20z" fill="#1487d4" /><path d="M23 1l8 3v24l-8 3z" fill="#25a9f2" /></svg></button>
        <button aria-label="Teams"><svg viewBox="0 0 32 32"><circle cx="26" cy="7" r="3" fill="#5059c9" /><path d="M21 13h10v10q-2 6-10 3z" fill="#5059c9" /><circle cx="16" cy="6" r="5" fill="#7b83eb" /><path d="M9 13h15v13q-3 6-9 4-6-1-6-7z" fill="#7b83eb" /><path d="M1 8h15v16H1z" fill="#4b53bc" /><text x="5" y="21" class="teams-letter">T</text></svg></button>
        <button class="running" aria-label="Discord"><svg class="wide" viewBox="0 0 40 40"><circle cx="20" cy="20" r="15" fill="#5865f2" /><path d="M13 14l5-1 1 1h3l1-1 5 1q4 7 3 12l-5 2-2-2h-8l-2 2-4-2q-1-5 3-12z" fill="#fff" /><circle cx="17" cy="21" r="2" fill="#5865f2" /><circle cx="24" cy="21" r="2" fill="#5865f2" /><circle cx="31" cy="9" r="9" fill="#ed5258" /><circle cx="31" cy="9" r="4" fill="#fff" /></svg></button>
        <button class="running focused" aria-label="Fusion"><svg viewBox="0 0 32 32"><path d="M4 2l3-2h21v31H8l-5-4z" fill="#ff6b00" /><path d="M3 2l5-2v24l-5 3z" fill="#ff9b52" /><path d="M7 22h22v10H7z" fill="#8c3a08" /><text x="14" y="17" class="fusion-letter">F</text><text x="12" y="30" class="fusion-sub">FUS</text></svg></button>
        <button class="running" aria-label="Arduino"><svg viewBox="0 0 32 32"><rect x="2" y="1" width="28" height="31" rx="5" fill="#239a9f" /><path d="M2 8V6q0-5 5-5h18q5 0 5 5v2z" fill="#7fc0c0" /><g fill="none" stroke="#e7f3f3" stroke-width="2"><circle cx="11" cy="16" r="4.500" /><circle cx="21" cy="16" r="4.500" /><path d="M9 16h4M19 16h4M21 14v4" stroke-width="1" /></g></svg></button>
      </div>
      <div class="tray">
        <button class="t-up" aria-label="Hidden icons"><svg viewBox="0 0 14 8"><path d="M1 7l6-6 6 6" fill="none" stroke="#fff" stroke-width="2" /></svg></button>
        <button class="t-cal" aria-label="Calendar"><svg viewBox="0 0 20 20"><rect width="20" height="20" rx="4" fill="#000" /><path d="M2 6h16v12H2z" fill="#fff" /><text x="4" y="16" class="cal-day">17</text></svg></button>
        <button class="t-pic" aria-label="Picture"><svg viewBox="0 0 20 20"><path d="M0 0h20v20H0z" fill="#8b857b" /><path d="M0 0h20v5H0z" fill="#111" /><path d="M0 6h20v2H0z" fill="#ddd" /><path d="M2 9h8v9H4z" fill="#d8940c" /><path d="M10 11l4-2 6 4v5H9z" fill="#eee" /></svg></button>
        <button class="t-lang">ENG<br />US</button>
        <button class="t-status" aria-label="Network, volume and battery">
          <svg viewBox="0 0 20 16"><g fill="none" stroke="#fff" stroke-width="1.500"><path d="M1 6q9-9 18 0M4 9q6-6 12 0M7 12q3-3 6 0" /></g><circle cx="10" cy="14" r="1.700" fill="#fff" /></svg>
          <svg viewBox="0 0 20 16"><g fill="none" stroke="#fff" stroke-width="1.300"><path d="M1 5h3l5-4v14l-5-4H1zM11 5q2 3 0 6M13 3q4 5 0 10" /><path d="M16 1q5 7 0 14" stroke="#667" /></g></svg>
          <svg viewBox="0 0 20 16"><rect x="2" y="4" width="15" height="10" rx="2" fill="none" stroke="#fff" stroke-width="1.500" /><path d="M5 7l3-1h6v5H5zM18 7h2v4h-2zM3 0v4H0l5 7V6h3z" fill="#fff" /></svg>
        </button>
        <button class="t-clock">3:07 PM<br />17/02/2024</button>
        <button class="t-bell" aria-label="Notifications"><svg viewBox="0 0 18 20"><path d="M2 8q0-7 6-7 8 0 8 7v5l1 3H0l2-3zM5 17h6q-3 4-6 0z" fill="#fff" /><path d="M6 6h4l-4 5h4M11 1h4l-3 4h4" fill="none" stroke="#35151f" stroke-width="1.300" /></svg></button>
      </div>
    </footer>

    <script>
      const NS = "http://www.w3.org/2000/svg";
      const grid = document.getElementById("grid");
      const origin = { x: 982, y: 711.5 };
      const slope = 120.5 / 208.7;
      const minorStep = 120.5 / 5;

      // offset shifts the line up or down from the origin
      function gridLine(offset, direction, className) {
        const line = document.createElementNS(NS, "line");
        const reach = 2400;
        line.setAttribute("x1", origin.x - reach);
        line.setAttribute("y1", origin.y + offset - reach * slope * direction);
        line.setAttribute("x2", origin.x + reach);
        line.setAttribute("y2", origin.y + offset + reach * slope * direction);
        line.setAttribute("class", className);
        grid.appendChild(line);
      }

      for (let i = -70; i <= 70; i++) {
        if (i % 5 !== 0) {
          gridLine(i * minorStep, 1, "minor");
          gridLine(i * minorStep, -1, "minor");
        }
      }
      for (let i = -14; i <= 14; i++) {
        if (i !== 0) {
          gridLine(i * minorStep * 5, 1, "major");
          gridLine(i * minorStep * 5, -1, "major");
        }
      }
      gridLine(0, 1, "axis-x");
      gridLine(0, -1, "axis-y");
    </script>
  </body>
</html>
```
FILE: styles.css
```
* {
  margin: 0;
  padding: 0;
  box-sizing: border-box;
}

body {
  height: 100vh;
  display: flex;
  flex-direction: column;
  overflow: hidden;
  font-family: "Liberation Sans", Arial, sans-serif;
  font-size: 14px;
  color: #333;
  background: #f1f1f1;
}

button {
  border: none;
  background: none;
  font: inherit;
  color: inherit;
  cursor: pointer;
}

a {
  color: inherit;
  text-decoration: none;
}

svg {
  display: block;
  flex: none;
}

.defs {
  position: absolute;
  width: 0;
  height: 0;
}

.caret {
  display: inline-block;
  border: 4px solid transparent;
  border-top: 6px solid #333;
  border-bottom: none;
}

.caret.big {
  border-width: 6px 4px 0;
  border-top-color: #666;
}

.caret.dim {
  border-top-color: #999;
}

/* Title bar */
.titlebar {
  flex: none;
  height: 29px;
  display: flex;
  align-items: center;
  padding-left: 3px;
  background: linear-gradient(90deg, #f4f0f8, #f1f2f9 30%, #f2f2f9 65%, #f9eef6 80%, #f9f0f2);
}

.app-logo {
  width: 18px;
  height: 20px;
}

.logo-letter {
  font: bold 11px "Liberation Sans", sans-serif;
  fill: #fff;
}

.titlebar h1 {
  flex: 1;
  margin-left: 7px;
  font: 14px "Open Sans", "Noto Sans", sans-serif;
  color: #111;
}

.window-buttons {
  display: flex;
  padding-right: 3px;
}

.window-buttons button {
  width: 58px;
  height: 29px;
  display: grid;
  place-items: center;
}

.window-buttons svg {
  width: 12px;
  height: 12px;
  fill: none;
  stroke: #111;
  overflow: visible;
}

/* Document bar */
.docbar {
  flex: none;
  height: 40px;
  display: flex;
  background: #cbcbcb;
}

.quick {
  width: 285px;
  flex: none;
  display: flex;
  align-items: center;
  padding-left: 11px;
}

.quick button {
  display: flex;
  align-items: center;
  gap: 6px;
  margin-right: 24px;
}

.quick svg {
  width: 18px;
  height: 18px;
}

.quick .q-file svg {
  height: 20px;
}

.quick .q-undo {
  margin-right: 16px;
}

.quick .q-redo {
  margin-right: 14px;
}

.quick .q-link {
  margin: 0;
}

.quick .q-link svg {
  width: 22px;
  height: 22px;
}

.doc-tabs {
  flex: 1;
  min-width: 0;
  display: flex;
  gap: 5px;
  padding-top: 5px;
}

.doc-tabs > * {
  background: #b9b9b9;
  border-radius: 5px 5px 0 0;
}

.home {
  width: 49px;
  display: grid;
  place-items: center;
  padding-top: 4px;
}

.home svg {
  width: 20px;
  height: 18px;
}

.doc-tab {
  flex: 1;
  min-width: 0;
  display: flex;
  align-items: center;
  padding: 0 8px 0 6px;
  font-size: 15px;
  color: #666;
}

.doc-tab a {
  flex: 1;
  display: flex;
  align-items: center;
  justify-content: center;
  gap: 6px;
  padding-top: 2px;
  white-space: nowrap;
}

.doc-tab a svg {
  width: 20px;
  height: 20px;
}

.doc-tab button svg {
  width: 12px;
  height: 12px;
}

.doc-tab.current {
  background: #f1f1f1;
  color: #333;
}

.new-tab {
  width: 35px;
  display: grid;
  place-items: center;
}

.new-tab svg {
  width: 16px;
  height: 16px;
}

.account {
  display: flex;
  align-items: center;
  gap: 21px;
  padding: 0 19px 0 16px;
}

.account svg {
  width: 20px;
  height: 20px;
}

.account .avatar {
  margin-left: 5px;
}

.account .avatar svg {
  width: 30px;
  height: 30px;
}

/* Ribbon */
.ribbon {
  flex: none;
  height: 106px;
  display: flex;
  background: #f1f1f1;
}

.workspace {
  width: 138px;
  height: 76px;
  margin: 13px 7px 0 14px;
  padding-bottom: 2px;
  border: 1px solid #ccc;
  border-radius: 5px;
  font-weight: bold;
}

.workspace .caret {
  margin-bottom: 1px;
}

.ribbon-tabs {
  display: flex;
  gap: 24px;
  height: 30px;
  padding-left: 13px;
}

.ribbon-tabs a {
  padding: 6px 16px 0;
  height: 29px;
}

.ribbon-tabs .active {
  border-bottom: 3px solid #0696d7;
  font-weight: bold;
  color: #0696d7;
}

.groups {
  display: flex;
  padding-top: 3px;
}

.group {
  height: 64px;
  padding: 0 12px;
  border-right: 2px solid #d6d6d6;
  text-align: center;
}

.group:last-child {
  border-right: none;
}

.tools {
  display: flex;
  justify-content: center;
  gap: 14px;
  height: 48px;
  padding-top: 1px;
}

.tools button,
.tools svg {
  width: 40px;
  height: 40px;
}

.tools .selected,
.tools .selected svg {
  width: 48px;
  height: 48px;
}

.tools .selected {
  margin: -4px 0;
  background: #0696d7;
}

.group-label {
  padding: 0 4px;
  white-space: nowrap;
}

/* Canvas */
.canvas {
  flex: 1;
  min-height: 0;
  position: relative;
  background: #fff;
}

.scene {
  width: 100%;
  height: 100%;
}

.minor {
  stroke: #f0f0f0;
  stroke-width: 1.5;
}

.major {
  stroke: #d4d4d4;
  stroke-width: 1.5;
}

.axis-x {
  stroke: #ff9494;
  stroke-width: 1.5;
}

.axis-y {
  stroke: #86f586;
  stroke-width: 1.5;
}

.browser {
  position: absolute;
  top: 5px;
  left: 5px;
  width: 374px;
}

.panel-head {
  height: 31px;
  display: flex;
  align-items: center;
  padding: 0 13px 0 6px;
  background: #f1f1f1;
  border: 1px solid #ccc;
  border-bottom-width: 2px;
}

.panel-head h2 {
  flex: 1;
  margin-left: 11px;
  font-size: 14px;
  font-weight: normal;
  color: #555;
}

.panel-head svg {
  width: 13px;
  height: 8px;
}

.panel-head .round {
  width: 12px;
  height: 12px;
}

.comments {
  position: absolute;
  left: 5px;
  bottom: 6px;
  width: 374px;
  border-top: none;
}

.comments h2 {
  margin-left: 24px;
}

.tree {
  list-style: none;
  padding-top: 6px;
}

.tree li {
  display: flex;
  align-items: center;
  height: 25px;
  margin-bottom: 5px;
  padding-left: 46px;
}

.tree .root {
  padding-left: 22px;
}

.open {
  width: 10px;
  height: 10px;
  margin-right: 13px;
}

.shut {
  width: 9px;
  height: 14px;
  margin-right: 13px;
  fill: #fff;
  stroke: #333;
}

.node {
  height: 25px;
  display: flex;
  align-items: center;
  gap: 13px;
  padding: 0 12px 0 3px;
  background: #f1f1f1;
  white-space: nowrap;
}

.root .node {
  padding: 0 8px 0 4px;
  gap: 8px;
}

.origin {
  gap: 12px;
}

.node span {
  margin-left: 4px;
}

.i-eye {
  width: 20px;
  height: 14px;
}

.i-part,
.i-gear {
  width: 17px;
  height: 18px;
}

.settings .i-gear {
  margin-right: -1px;
}

.i-link {
  width: 20px;
  height: 20px;
}

.i-folder {
  width: 21px;
  height: 17px;
}

.i-warn {
  width: 16px;
  height: 16px;
  margin: 0 2px 0 -3px;
}

.root .assembly {
  width: 31px;
  height: 20px;
  margin: 0;
  display: grid;
  place-items: center;
  background: #999;
}

.assembly svg {
  width: 20px;
  height: 18px;
}

.root .label {
  margin: 0;
  padding: 0 9px;
  line-height: 20px;
  font-weight: bold;
  color: #fff;
  background: #999;
}

.root input {
  appearance: none;
  width: 17px;
  height: 17px;
  margin-left: -3px;
  border: 1px solid #555;
  border-radius: 50%;
  background: radial-gradient(#333 3px, #d3dae5 4px, #f4f4f4 8px);
}

.viewcube {
  position: absolute;
  top: 10px;
  right: 20px;
  width: 90px;
  height: 110px;
}

.axis {
  font: bold 12px "Liberation Sans", sans-serif;
}

.z {
  fill: #7c7cff;
}

.x {
  fill: #ff8080;
}

.face {
  font: bold 8px "Liberation Sans", sans-serif;
  fill: #999;
}

.navbar {
  position: absolute;
  left: 50%;
  bottom: 8px;
  transform: translateX(-50%);
  height: 30px;
  display: flex;
  align-items: center;
  gap: 12px;
  padding: 0 4px;
  background: #f1f1f1;
}

.navbar button {
  display: flex;
  align-items: center;
  gap: 6px;
}

.navbar .menu {
  margin-right: -4px;
}

.navbar .tight {
  gap: 3px;
}

.navbar svg {
  width: 20px;
  height: 20px;
}

/* Timeline */
.timeline {
  flex: none;
  height: 62px;
  display: flex;
  align-items: center;
  padding: 0 17px 2px 13px;
  border-top: 1px solid #d5d5d5;
  background: #f1f1f1;
}

.playback {
  display: flex;
  gap: 15px;
}

.playback svg {
  width: 16px;
  height: 18px;
}

.features {
  flex: 1;
  position: relative;
  margin-left: 30px;
}

.feature-row {
  display: flex;
  gap: 10px;
}

.feature-row svg,
.timeline-gear svg {
  width: 20px;
  height: 20px;
}

.bracket {
  position: absolute;
  top: 24px;
  left: 10px;
  width: 122px;
  height: 8px;
}

.marker {
  position: absolute;
  top: -8px;
  left: 137px;
  width: 15px;
  height: 40px;
}

/* Taskbar */
.taskbar {
  flex: none;
  height: 60px;
  display: grid;
  grid-template-columns: 1fr auto 1fr;
  align-items: center;
  padding-bottom: 2px;
  border-top: 1px solid #3b4048;
  background: linear-gradient(90deg, #1e2030, #1b2434 50%, #1d212b 85%, #2a1c29 93%, #46111b);
  color: #fff;
  font: 14px/20px "Open Sans", "Noto Sans", sans-serif;
}

.apps {
  grid-column: 2;
  display: flex;
  gap: 6px;
}

.apps button {
  width: 49px;
  height: 50px;
  display: grid;
  place-items: center;
  border-radius: 5px;
  position: relative;
}

.apps svg {
  width: 32px;
  height: 32px;
}

.apps .wide {
  width: 40px;
  height: 40px;
}

.running::after {
  content: "";
  position: absolute;
  bottom: 1px;
  width: 8px;
  height: 4px;
  border-radius: 2px;
  background: #9a9ca3;
}

.focused {
  background: #2c303c;
}

.focused::after {
  width: 20px;
  background: #0a91ff;
}

.teams-letter {
  font: bold 13px "Liberation Sans", sans-serif;
  fill: #fff;
}

.fusion-letter {
  font: bold 15px "Liberation Sans", sans-serif;
  fill: #fff;
}

.fusion-sub {
  font: bold 7px "Liberation Sans", sans-serif;
  fill: #fff;
}

.cal-day {
  font: bold 11px "Liberation Sans", sans-serif;
  fill: #111;
}

.tray {
  display: flex;
  align-items: center;
  justify-content: flex-end;
  padding-right: 25px;
}

.t-up svg {
  width: 14px;
  height: 8px;
}

.t-cal,
.t-pic,
.t-lang {
  margin-left: 22px;
}

.t-cal svg,
.t-pic svg {
  width: 20px;
  height: 20px;
}

.t-status {
  display: flex;
  gap: 10px;
  margin-left: 22px;
}

.t-status svg {
  width: 20px;
  height: 16px;
}

.t-clock {
  margin: 0 11px 0 24px;
  text-align: right;
}

.t-bell svg {
  width: 18px;
  height: 20px;
}
```
